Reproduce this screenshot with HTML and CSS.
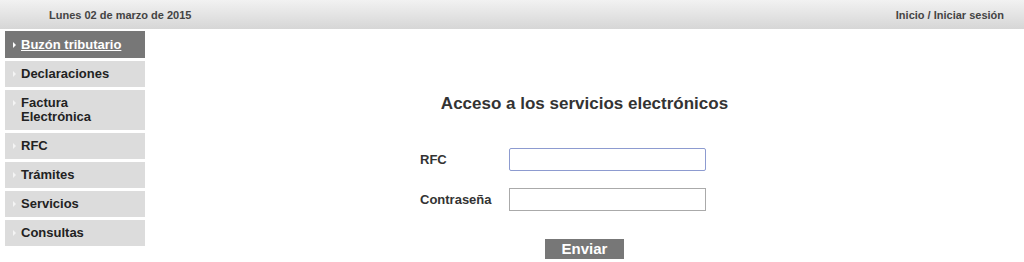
FILE: index.html
```html
<!DOCTYPE html>
<html lang="es">
<head>
<meta charset="utf-8">
<link rel="stylesheet" href="styles.css">
</head>
<body>
<header class="topbar">
  <span class="date">Lunes 02 de marzo de 2015</span>
  <span class="links">Inicio / Iniciar sesión</span>
</header>
<div class="layout">
  <nav class="sidebar">
    <a class="item active" href="#">Buzón tributario</a>
    <a class="item" href="#">Declaraciones</a>
    <a class="item" href="#">Factura<br>Electrónica</a>
    <a class="item" href="#">RFC</a>
    <a class="item" href="#">Trámites</a>
    <a class="item" href="#">Servicios</a>
    <a class="item" href="#">Consultas</a>
  </nav>
  <main class="content">
    <h1 class="title">Acceso a los servicios electrónicos</h1>
    <form class="form">
      <label class="label" for="rfc">RFC</label>
      <input class="field focused" id="rfc" type="text">
      <label class="label" for="pw">Contraseña</label>
      <input class="field" id="pw" type="password">
    </form>
    <div class="actions"><button class="btn" type="button">Enviar</button></div>
  </main>
</div>
</body>
</html>
```
FILE: styles.css
```css
html, body { margin: 0; padding: 0; background: #fff; }
body { font-family: "Liberation Sans", Arial, sans-serif; color: #333; }
.topbar {
  height: 29px;
  display: flex;
  align-items: center;
  justify-content: space-between;
  padding: 0 20px 0 49px;
  background: linear-gradient(#f2f2f2, #d6d6d6);
  font-size: 11px;
  font-weight: bold;
  color: #444;
}
.layout { display: flex; align-items: flex-start; }
.sidebar {
  width: 140px;
  margin: 2px 0 0 5px;
  display: flex;
  flex-direction: column;
  gap: 3px;
}
.item {
  position: relative;
  display: block;
  background: #dcdcdc;
  color: #222;
  font-size: 13px;
  font-weight: bold;
  text-decoration: none;
  line-height: 14px;
  padding: 6px 4px 6px 16px;
}
.item::before {
  content: "";
  position: absolute;
  left: 8px;
  top: 10px;
  border-left: 3px solid #f4f4f4;
  border-top: 3px solid transparent;
  border-bottom: 3px solid transparent;
}
.item.active { background: #777; color: #fff; text-decoration: underline; padding-top: 7px; }
.item.active::before { border-left-color: #fff; top: 11px; }
.content { flex: 1; padding-top: 65px; }
.title {
  margin: 0;
  text-align: center;
  font-size: 17px;
  font-weight: bold;
  color: #333;
  line-height: 20px;
}
.form {
  margin: 34px 0 0 275px;
  display: grid;
  grid-template-columns: 89px 197px;
  row-gap: 17px;
  align-items: center;
}
.label { font-size: 13px; font-weight: bold; color: #333; }
.field {
  box-sizing: border-box;
  height: 23px;
  width: 197px;
  margin: 0;
  border: 1px solid #aaa;
  background: #fff;
  padding: 2px 4px;
  font-size: 12px;
}
.field.focused { border-color: #8d9bd0; border-radius: 2px; }
.actions { text-align: center; margin-top: 28px; }
.btn {
  width: 79px;
  height: 20px;
  border: 0;
  background: #777;
  color: #fff;
  font-family: "Liberation Sans", Arial, sans-serif;
  font-size: 15px;
  font-weight: bold;
  padding: 0;
  line-height: 20px;
}
```
